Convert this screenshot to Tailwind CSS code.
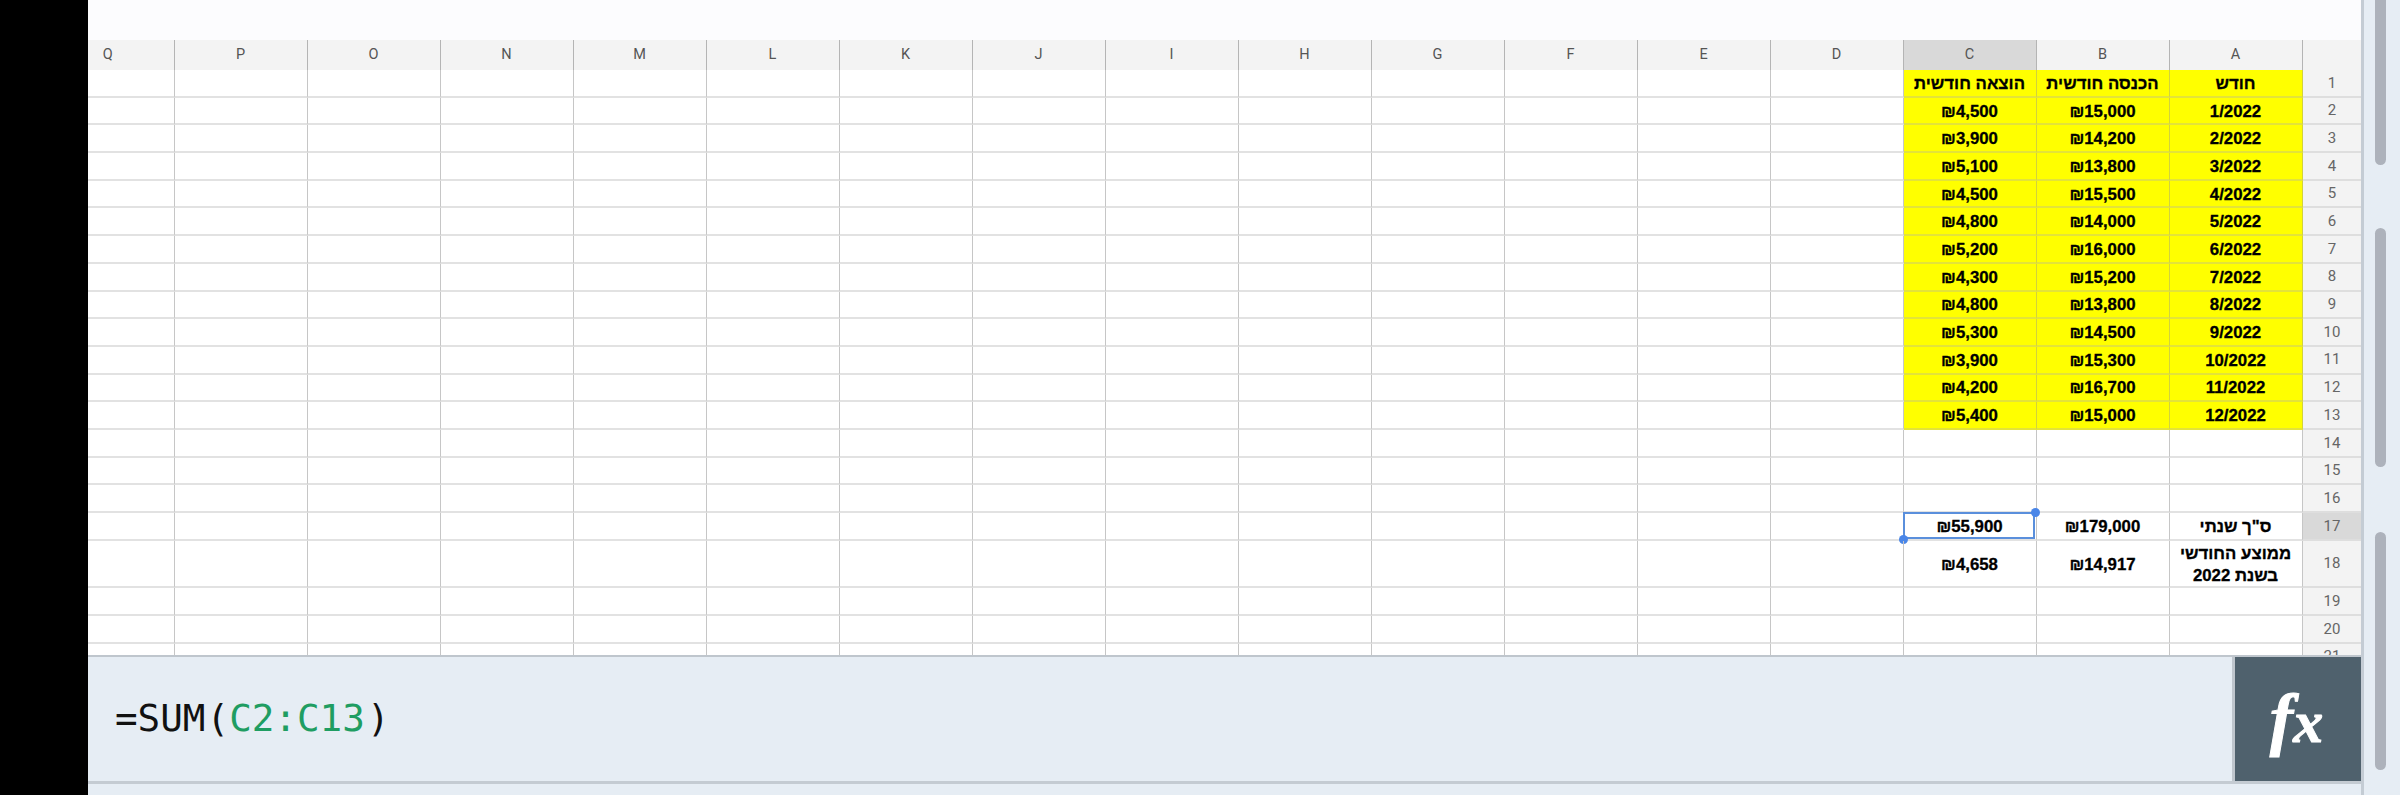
<!DOCTYPE html>
<html lang="en">
<head>
    <meta charset="UTF-8">
    <title>Sheet</title>
    <script src="https://cdn.jsdelivr.net/npm/@tailwindcss/browser@4"></script>
</head>
<body class="bg-black">
    <div class="flex w-[2400px] h-[795px] overflow-hidden">
        <div class="w-[88px] bg-black"></div>

        <main class="w-[2273px] flex flex-col bg-[#e6edf4]">
            <div class="h-[39.5px] shrink-0 bg-[#fcfcfe]"></div>
            <!-- rows get filled in by the script below -->
            <div id="grid" class="h-[615px] shrink-0 overflow-hidden bg-white font-['Liberation_Sans',sans-serif]"></div>
            <div class="flex h-[126px] shrink-0 border-t-[2px] border-[#bfc6cd]">
                <div class="flex-1 flex items-center pl-[27px] font-['DejaVu_Sans_Mono',monospace] text-[37.6px] text-[#111]">
                    <span>=SUM<span class="pl-[1px]">(</span></span><span class="text-[#1f9d62]">C2:C13</span><span class="pl-[2px]">)</span>
                </div>
                <div class="w-[129px] border-l-[3px] border-[#bfc6cd] bg-[#4f616d] flex items-center justify-center">
                    <span class="font-['Liberation_Serif',serif] italic font-bold text-[70px] leading-none text-white [-webkit-text-stroke:1px_white] pt-[1px] pr-[3px]">f<span class="text-[60px]">x</span></span>
                </div>
            </div>
            <div class="h-[3px] shrink-0 bg-[#c4cbd2]"></div>
        </main>

        <div class="w-[39px] bg-[#e6edf4] border-l-[3px] border-[#c4ccd4] pl-[11px] flex flex-col">
            <div class="w-[11px] h-[165px] bg-[#adb2bb] rounded-b-[6px]"></div>
            <div class="w-[11px] h-[239px] mt-[63px] bg-[#adb2bb] rounded-[6px]"></div>
            <div class="w-[11px] h-[238px] mt-[65px] bg-[#adb2bb] rounded-[6px]"></div>
        </div>
    </div>

    <script>
        const letters = ['Q','P','O','N','M','L','K','J','I','H','G','F','E','D','C','B','A'];

        // only the three right columns hold data, listed as [C, B, A]
        const data = {
            1: ['הוצאה חודשית', 'הכנסה חודשית', 'חודש'],
            2: ['₪4,500', '₪15,000', '1/2022'],
            3: ['₪3,900', '₪14,200', '2/2022'],
            4: ['₪5,100', '₪13,800', '3/2022'],
            5: ['₪4,500', '₪15,500', '4/2022'],
            6: ['₪4,800', '₪14,000', '5/2022'],
            7: ['₪5,200', '₪16,000', '6/2022'],
            8: ['₪4,300', '₪15,200', '7/2022'],
            9: ['₪4,800', '₪13,800', '8/2022'],
            10: ['₪5,300', '₪14,500', '9/2022'],
            11: ['₪3,900', '₪15,300', '10/2022'],
            12: ['₪4,200', '₪16,700', '11/2022'],
            13: ['₪5,400', '₪15,000', '12/2022'],
            17: ['₪55,900', '₪179,000', 'ס"ך שנתי'],
            18: ['₪4,658', '₪14,917', 'ממוצע החודשי<br>בשנת 2022']
        };

        const selection = `
            <div class="absolute left-[-1px] top-[-1px] w-[132px] h-[27px] border-[2.5px] border-[#5a8fdc]"></div>
            <div class="absolute left-[-5px] top-[22px] w-[9px] h-[9px] rounded-full bg-[#4a86e8]"></div>
            <div class="absolute left-[127px] top-[-5px] w-[9px] h-[9px] rounded-full bg-[#4a86e8]"></div>`;

        let html = '<div class="flex h-[30.5px] bg-[#f3f3f3] font-[\'Roboto\',sans-serif] text-[14.5px] text-[#555]">';
        letters.forEach((l, i) => {
            const width = i == 0 ? 'w-[86.5px] pr-[46px]' : 'w-[133px]';
            const bg = l == 'C' ? 'bg-[#d9d9d9]' : '';
            html += `<div class="${width} ${bg} shrink-0 flex items-center justify-center border-r border-[#b4b4b4]">${l}</div>`;
        });
        html += '<div class="w-[59px] shrink-0"></div></div>';

        for (let r = 1; r <= 21; r++) {
            const cells = data[r];
            const yellow = r <= 13;
            const height = r == 18 ? 'h-[47.7px]' : 'h-[27.7px]';
            html += `<div class="flex ${height}">`;
            letters.forEach((l, i) => {
                const width = i == 0 ? 'w-[86.5px]' : 'w-[133px]';
                const idx = i - 14;
                const text = cells && idx >= 0 ? cells[idx] : '';
                const tone = yellow && idx >= 0
                    ? 'bg-[#ffff00] border-r-[#d2d23c] border-b-[#e3e33a]'
                    : 'border-r-[#c6c6c6] border-b-[#e2e2e2]';
                html += `<div dir="auto" class="${width} ${tone} relative shrink-0 flex items-center justify-center text-center border-r border-b-2 pt-[2px] font-bold text-[16.8px] leading-[22px] text-black [-webkit-text-stroke:0.3px_black]">${text}${r == 17 && l == 'C' ? selection : ''}</div>`;
            });
            const headTone = r == 17 ? 'bg-[#d9d9d9]' : 'bg-[#f3f3f3]';
            html += `<div class="w-[59px] ${headTone} shrink-0 flex items-center justify-center border-b-2 border-[#dedede] font-['Roboto',sans-serif] text-[15px] text-[#666]">${r}</div></div>`;
        }
        document.getElementById('grid').innerHTML = html;
    </script>
</body>
</html>
